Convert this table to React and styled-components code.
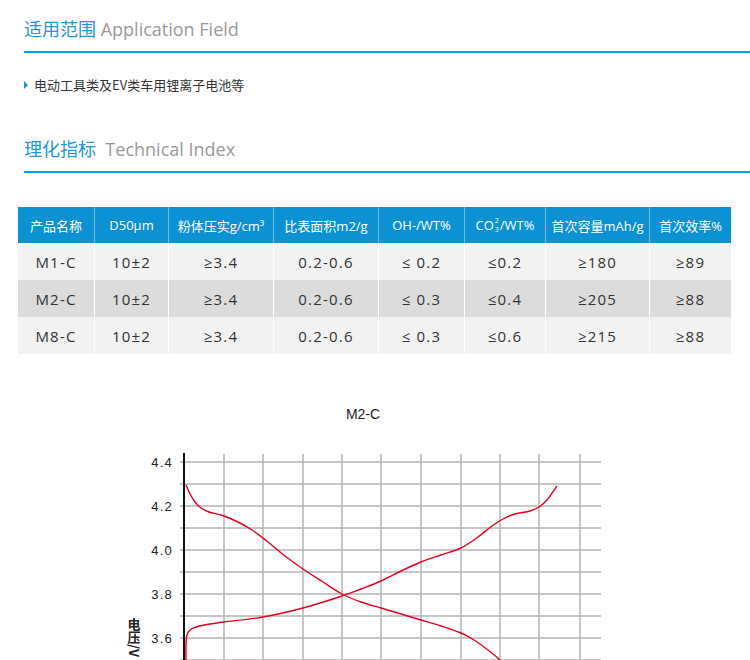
import styled, { createGlobalStyle } from "styled-components";

const GlobalStyle = createGlobalStyle`
  html, body {
    margin: 0;
    padding: 0;
    background: #ffffff;
  }
  body {
    font-family: "Open Sans", "Noto Sans CJK SC", sans-serif;
    color: #333333;
  }
`;

const Page = styled.div`
  width: 750px;
  overflow: hidden;
`;

const Heading = styled.h2`
  margin: ${(props) => props.top}px 0 0 24px;
  padding: 15px 0 9px;
  line-height: 26px;
  font-size: 18px;
  font-weight: 400;
  border-bottom: 2px solid #00a0e9;
  white-space: pre;
`;

const HeadingCn = styled.span`
  font-family: "Noto Sans CJK SC", sans-serif;
  color: #1e96d8;
`;

const HeadingEn = styled.span`
  font-family: "Open Sans", sans-serif;
  color: #9a9a9a;
`;

const BulletItem = styled.p`
  margin: 22px 0 0 24px;
  display: flex;
  align-items: center;
  gap: 6px;
  line-height: 20px;
  font-size: 13px;
  font-family: "Noto Sans CJK SC", sans-serif;
  color: #333333;

  &::before {
    content: "";
    width: 0;
    height: 0;
    border-top: 4px solid transparent;
    border-bottom: 4px solid transparent;
    border-left: 4px solid #1296db;
  }
`;

const Table = styled.div`
  margin: 34px 0 0 18px;
  width: 713px;
  display: grid;
  grid-template-columns: 76px 74px 105px 105px 86px 81px 104px 82px;
`;

const HeadCell = styled.div`
  height: 36px;
  background: #0c91d3;
  color: #ffffff;
  font-size: 13px;
  font-family: "Open Sans", "Noto Sans CJK SC", sans-serif;
  display: flex;
  align-items: center;
  justify-content: center;
  white-space: nowrap;
  box-sizing: border-box;
  border-left: ${(props) => (props.first ? "none" : "1px solid #6dbde6")};
`;

const Cell = styled.div`
  height: 37px;
  background: ${(props) => (props.shade ? "#dcdcdc" : "#f2f2f2")};
  color: #333333;
  font-size: 15px;
  letter-spacing: 1.2px;
  font-family: "Open Sans", sans-serif;
  display: flex;
  align-items: center;
  justify-content: center;
  box-sizing: border-box;
  border-left: ${(props) => (props.first ? "none" : "1px solid #ffffff")};
`;

const Stack = styled.span`
  display: inline-flex;
  flex-direction: column;
  align-items: center;
  font-size: 7px;
  line-height: 9px;
  margin: 0 1px;
`;

const ChartTitle = styled.div`
  width: 726px;
  margin-top: 50px;
  text-align: center;
  font-family: "Liberation Sans", Arial, sans-serif;
  font-size: 14px;
  line-height: 20px;
  color: #1d1d1d;
`;

const ChartSvg = styled.svg`
  display: block;
  margin: 17px 0 0 120px;
  font-family: "Liberation Sans", Arial, sans-serif;
`;

const headers = [
  "产品名称",
  "D50μm",
  "粉体压实g/cm³",
  "比表面积m2/g",
  "OH-/WT%",
  "CO3",
  "首次容量mAh/g",
  "首次效率%",
];

const rows = [
  ["M1-C", "10±2", "≥3.4", "0.2-0.6", "≤ 0.2", "≤0.2", "≥180", "≥89"],
  ["M2-C", "10±2", "≥3.4", "0.2-0.6", "≤ 0.3", "≤0.4", "≥205", "≥88"],
  ["M8-C", "10±2", "≥3.4", "0.2-0.6", "≤ 0.3", "≤0.6", "≥215", "≥88"],
];

// chart geometry, page coords shifted by (120, 440)
const OX = 120;
const OY = 440;
const hLines = Array.from({ length: 10 }, (_, i) => 461 + i * 22);
const vLines = [224, 263, 303, 342, 381, 421, 461, 500, 539, 580];
const yLabels = [
  ["4.4", 461],
  ["4.2", 505],
  ["4.0", 549],
  ["3.8", 593],
  ["3.6", 637],
];

const discharge = [
  [186, 484], [190, 493], [195, 501], [201, 507], [209, 511], [224, 515],
  [238, 521], [252, 529], [268, 541], [285, 555], [303, 568], [323, 581],
  [342, 593], [361, 601], [381, 607], [401, 613], [421, 619], [441, 625],
  [461, 632], [474, 639], [488, 649], [500, 659], [504, 664],
];

const charge = [
  [186, 664], [186, 642], [187, 634], [190, 629], [196, 626], [210, 623],
  [224, 621], [263, 616], [303, 607], [342, 595], [361, 588], [381, 580],
  [401, 570], [421, 561], [441, 554], [461, 547], [478, 536], [492, 525],
  [503, 518], [515, 513], [530, 510], [539, 506], [547, 499], [557, 485],
];

// Catmull-Rom through the sampled points
const smoothPath = (pts) => {
  const p = pts.map(([x, y]) => [x - OX, y - OY]);
  let d = `M${p[0][0]},${p[0][1]}`;
  for (let i = 0; i < p.length - 1; i++) {
    const p0 = p[i - 1] || p[i];
    const p1 = p[i];
    const p2 = p[i + 1];
    const p3 = p[i + 2] || p2;
    const c1x = p1[0] + (p2[0] - p0[0]) / 6;
    const c1y = p1[1] + (p2[1] - p0[1]) / 6;
    const c2x = p2[0] - (p3[0] - p1[0]) / 6;
    const c2y = p2[1] - (p3[1] - p1[1]) / 6;
    d += ` C${c1x.toFixed(1)},${c1y.toFixed(1)} ${c2x.toFixed(1)},${c2y.toFixed(1)} ${p2[0]},${p2[1]}`;
  }
  return d;
};

function Chart() {
  return (
    <ChartSvg width="500" height="230" viewBox="0 0 500 230">
      {hLines.map((y) => (
        <line key={y} x1={180 - OX} x2={601 - OX} y1={y - OY} y2={y - OY} stroke="#b4b4b4" strokeWidth="1.5" />
      ))}
      {vLines.map((x) => (
        <line key={x} x1={x - OX} x2={x - OX} y1={453 - OY} y2={230} stroke="#b4b4b4" strokeWidth="1.5" />
      ))}
      <line x1={184 - OX} x2={184 - OX} y1={452 - OY} y2={230} stroke="#111" strokeWidth="2" />
      {yLabels.map(([t, y]) => (
        <text key={t} x={173 - OX} y={y - OY + 5} textAnchor="end" fontSize="13" letterSpacing="1.2" fill="#222">
          {t}
        </text>
      ))}
      <text
        x={134 - OX}
        y={617 - OY}
        fontSize="13"
        fontWeight="700"
        fill="#222"
        style={{ writingMode: "vertical-rl", fontFamily: '"Noto Sans CJK SC", sans-serif' }}
      >
        电压/V
      </text>
      <path d={smoothPath(discharge)} fill="none" stroke="#e3001b" strokeWidth="1.4" />
      <path d={smoothPath(charge)} fill="none" stroke="#e3001b" strokeWidth="1.4" />
    </ChartSvg>
  );
}

export default function App() {
  return (
    <Page>
      <GlobalStyle />
      <Heading top={0}>
        <HeadingCn>适用范围</HeadingCn> <HeadingEn>Application Field</HeadingEn>
      </Heading>
      <BulletItem>电动工具类及EV类车用锂离子电池等</BulletItem>
      <Heading top={25}>
        <HeadingCn>理化指标</HeadingCn>{"  "}<HeadingEn>Technical Index</HeadingEn>
      </Heading>
      <Table>
        {headers.map((h, i) => (
          <HeadCell key={h} first={i === 0}>
            {h === "CO3" ? (
              <>
                CO
                <Stack>
                  <span>2</span>
                  <span>3</span>
                </Stack>
                /WT%
              </>
            ) : (
              h
            )}
          </HeadCell>
        ))}
        {rows.map((row, r) =>
          row.map((v, c) => (
            <Cell key={`${r}-${c}`} first={c === 0} shade={r === 1}>
              {v}
            </Cell>
          ))
        )}
      </Table>
      <ChartTitle>M2-C</ChartTitle>
      <Chart />
    </Page>
  );
}
